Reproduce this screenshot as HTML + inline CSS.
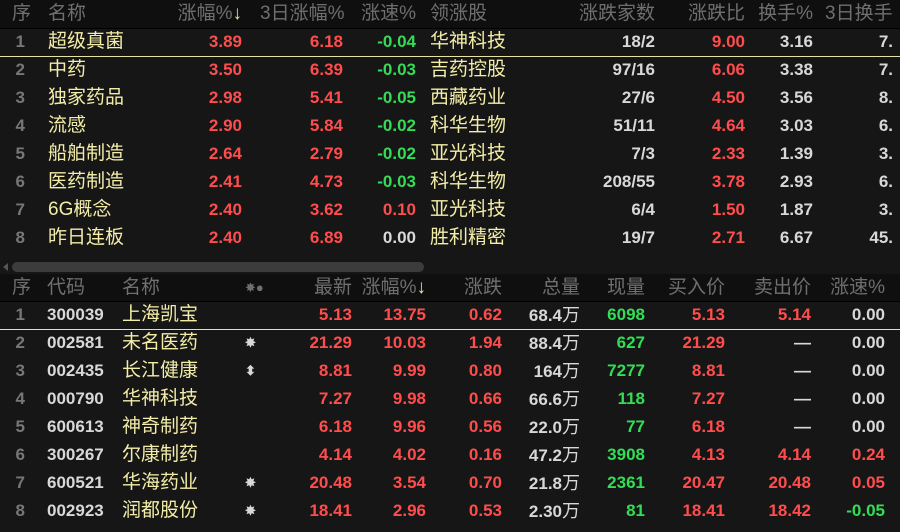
<!DOCTYPE html>
<html><head><meta charset="utf-8"><style>
body{margin:0;width:900px;height:532px;background:#161616;overflow:hidden;position:relative;font-family:"Liberation Sans","Noto Sans CJK SC",sans-serif}
.h{position:absolute;left:0;width:900px;background:#0f0f0f;border-bottom:1px solid #000}
.row{position:absolute;left:0;width:900px;height:28px}
.row span{position:absolute;top:0;line-height:28px;white-space:nowrap;font-weight:bold;font-size:17px;color:#d8d8d8}
.row.hd span{color:#6f6f6f;font-size:19px;font-weight:normal}
.row span.nm{color:#f3eda8;font-size:19px;font-weight:normal}
.r{color:#ff4d4d!important}.g{color:#33dd55!important}.gr{color:#777!important}
.line{position:absolute;left:0;width:900px;height:1px;background:#e8e3a0}
.a1,.b1{left:0;width:25px;text-align:right}
.a2{left:48px}
.a3{left:150px;width:92px;text-align:right}
.a4{left:260px;width:83px;text-align:right}
.a5{left:350px;width:66px;text-align:right}
.a6{left:430px}
.a7{left:560px;width:95px;text-align:right}
.a8{left:660px;width:85px;text-align:right}
.a9{left:740px;width:73px;text-align:right}
.a10{left:820px;width:73px;text-align:right}
.b2{left:47px}.b3{left:122px}.b4{left:245px;font-size:13px!important}
.b5{left:270px;width:82px;text-align:right}
.b6{left:350px;width:76px;text-align:right}
.b7{left:440px;width:62px;text-align:right}
.b8{left:505px;width:75px;text-align:right}
.b9{left:590px;width:55px;text-align:right}
.b10{left:650px;width:75px;text-align:right}
.b11{left:730px;width:81px;text-align:right}
.b12{left:815px;width:70px;text-align:right}
.wan{font-weight:normal!important;font-size:18px!important;position:static!important}
.hd .a10{left:825px;width:auto;text-align:left}
.ar{position:static!important;color:#e8e3a0!important}
</style></head><body>
<div class="h" style="top:0;height:28px"></div>
<div class="h" style="top:274px;height:27px"></div>
<div class="line" style="top:56px"></div>
<div class="line" style="top:329px"></div>
<div style="position:absolute;left:12px;top:262px;width:412px;height:10px;background:#3c3c3c;border-radius:5px"></div>
<div style="position:absolute;left:3px;top:263px;width:0;height:0;border-top:4px solid transparent;border-bottom:4px solid transparent;border-right:5px solid #555"></div>

<div class="row hd" style="top:0"><span style="left:12px">序</span><span class="a2">名称</span><span class="a3">涨幅%<span class="ar">↓</span></span><span class="a4">3日涨幅%</span><span class="a5">涨速%</span><span class="a6">领涨股</span><span class="a7">涨跌家数</span><span class="a8">涨跌比</span><span class="a9">换手%</span><span class="a10">3日换手</span></div>

<div class="row" style="top:28px"><span class="a1 gr">1</span><span class="a2 nm">超级真菌</span><span class="a3 r">3.89</span><span class="a4 r">6.18</span><span class="a5 g">-0.04</span><span class="a6 nm">华神科技</span><span class="a7">18/2</span><span class="a8 r">9.00</span><span class="a9">3.16</span><span class="a10">7.</span></div>
<div class="row" style="top:56px"><span class="a1 gr">2</span><span class="a2 nm">中药</span><span class="a3 r">3.50</span><span class="a4 r">6.39</span><span class="a5 g">-0.03</span><span class="a6 nm">吉药控股</span><span class="a7">97/16</span><span class="a8 r">6.06</span><span class="a9">3.38</span><span class="a10">7.</span></div>
<div class="row" style="top:84px"><span class="a1 gr">3</span><span class="a2 nm">独家药品</span><span class="a3 r">2.98</span><span class="a4 r">5.41</span><span class="a5 g">-0.05</span><span class="a6 nm">西藏药业</span><span class="a7">27/6</span><span class="a8 r">4.50</span><span class="a9">3.56</span><span class="a10">8.</span></div>
<div class="row" style="top:112px"><span class="a1 gr">4</span><span class="a2 nm">流感</span><span class="a3 r">2.90</span><span class="a4 r">5.84</span><span class="a5 g">-0.02</span><span class="a6 nm">科华生物</span><span class="a7">51/11</span><span class="a8 r">4.64</span><span class="a9">3.03</span><span class="a10">6.</span></div>
<div class="row" style="top:140px"><span class="a1 gr">5</span><span class="a2 nm">船舶制造</span><span class="a3 r">2.64</span><span class="a4 r">2.79</span><span class="a5 g">-0.02</span><span class="a6 nm">亚光科技</span><span class="a7">7/3</span><span class="a8 r">2.33</span><span class="a9">1.39</span><span class="a10">3.</span></div>
<div class="row" style="top:168px"><span class="a1 gr">6</span><span class="a2 nm">医药制造</span><span class="a3 r">2.41</span><span class="a4 r">4.73</span><span class="a5 g">-0.03</span><span class="a6 nm">科华生物</span><span class="a7">208/55</span><span class="a8 r">3.78</span><span class="a9">2.93</span><span class="a10">6.</span></div>
<div class="row" style="top:196px"><span class="a1 gr">7</span><span class="a2 nm">6G概念</span><span class="a3 r">2.40</span><span class="a4 r">3.62</span><span class="a5 r">0.10</span><span class="a6 nm">亚光科技</span><span class="a7">6/4</span><span class="a8 r">1.50</span><span class="a9">1.87</span><span class="a10">3.</span></div>
<div class="row" style="top:224px"><span class="a1 gr">8</span><span class="a2 nm">昨日连板</span><span class="a3 r">2.40</span><span class="a4 r">6.89</span><span class="a5">0.00</span><span class="a6 nm">胜利精密</span><span class="a7">19/7</span><span class="a8 r">2.71</span><span class="a9">6.67</span><span class="a10">45.</span></div>

<div class="row hd" style="top:274px"><span style="left:12px">序</span><span class="b2">代码</span><span class="b3">名称</span><span class="b4" style="font-size:14px">✸●</span><span class="b5">最新</span><span class="b6">涨幅%<span class="ar">↓</span></span><span class="b7">涨跌</span><span class="b8">总量</span><span class="b9">现量</span><span class="b10">买入价</span><span class="b11">卖出价</span><span class="b12">涨速%</span></div>

<div class="row" style="top:301px"><span class="b1 gr">1</span><span class="b2">300039</span><span class="b3 nm">上海凯宝</span><span class="b5 r">5.13</span><span class="b6 r">13.75</span><span class="b7 r">0.62</span><span class="b8">68.4<span class="wan">万</span></span><span class="b9 g">6098</span><span class="b10 r">5.13</span><span class="b11 r">5.14</span><span class="b12">0.00</span></div>
<div class="row" style="top:329px"><span class="b1 gr">2</span><span class="b2">002581</span><span class="b3 nm">未名医药</span><span class="b4">✸</span><span class="b5 r">21.29</span><span class="b6 r">10.03</span><span class="b7 r">1.94</span><span class="b8">88.4<span class="wan">万</span></span><span class="b9 g">627</span><span class="b10 r">21.29</span><span class="b11">—</span><span class="b12">0.00</span></div>
<div class="row" style="top:357px"><span class="b1 gr">3</span><span class="b2">002435</span><span class="b3 nm">长江健康</span><span class="b4">⬍</span><span class="b5 r">8.81</span><span class="b6 r">9.99</span><span class="b7 r">0.80</span><span class="b8">164<span class="wan">万</span></span><span class="b9 g">7277</span><span class="b10 r">8.81</span><span class="b11">—</span><span class="b12">0.00</span></div>
<div class="row" style="top:385px"><span class="b1 gr">4</span><span class="b2">000790</span><span class="b3 nm">华神科技</span><span class="b5 r">7.27</span><span class="b6 r">9.98</span><span class="b7 r">0.66</span><span class="b8">66.6<span class="wan">万</span></span><span class="b9 g">118</span><span class="b10 r">7.27</span><span class="b11">—</span><span class="b12">0.00</span></div>
<div class="row" style="top:413px"><span class="b1 gr">5</span><span class="b2">600613</span><span class="b3 nm">神奇制药</span><span class="b5 r">6.18</span><span class="b6 r">9.96</span><span class="b7 r">0.56</span><span class="b8">22.0<span class="wan">万</span></span><span class="b9 g">77</span><span class="b10 r">6.18</span><span class="b11">—</span><span class="b12">0.00</span></div>
<div class="row" style="top:441px"><span class="b1 gr">6</span><span class="b2">300267</span><span class="b3 nm">尔康制药</span><span class="b5 r">4.14</span><span class="b6 r">4.02</span><span class="b7 r">0.16</span><span class="b8">47.2<span class="wan">万</span></span><span class="b9 g">3908</span><span class="b10 r">4.13</span><span class="b11 r">4.14</span><span class="b12 r">0.24</span></div>
<div class="row" style="top:469px"><span class="b1 gr">7</span><span class="b2">600521</span><span class="b3 nm">华海药业</span><span class="b4">✸</span><span class="b5 r">20.48</span><span class="b6 r">3.54</span><span class="b7 r">0.70</span><span class="b8">21.8<span class="wan">万</span></span><span class="b9 g">2361</span><span class="b10 r">20.47</span><span class="b11 r">20.48</span><span class="b12 r">0.05</span></div>
<div class="row" style="top:497px"><span class="b1 gr">8</span><span class="b2">002923</span><span class="b3 nm">润都股份</span><span class="b4">✸</span><span class="b5 r">18.41</span><span class="b6 r">2.96</span><span class="b7 r">0.53</span><span class="b8">2.30<span class="wan">万</span></span><span class="b9 g">81</span><span class="b10 r">18.41</span><span class="b11 r">18.42</span><span class="b12 g">-0.05</span></div>
</body></html>
